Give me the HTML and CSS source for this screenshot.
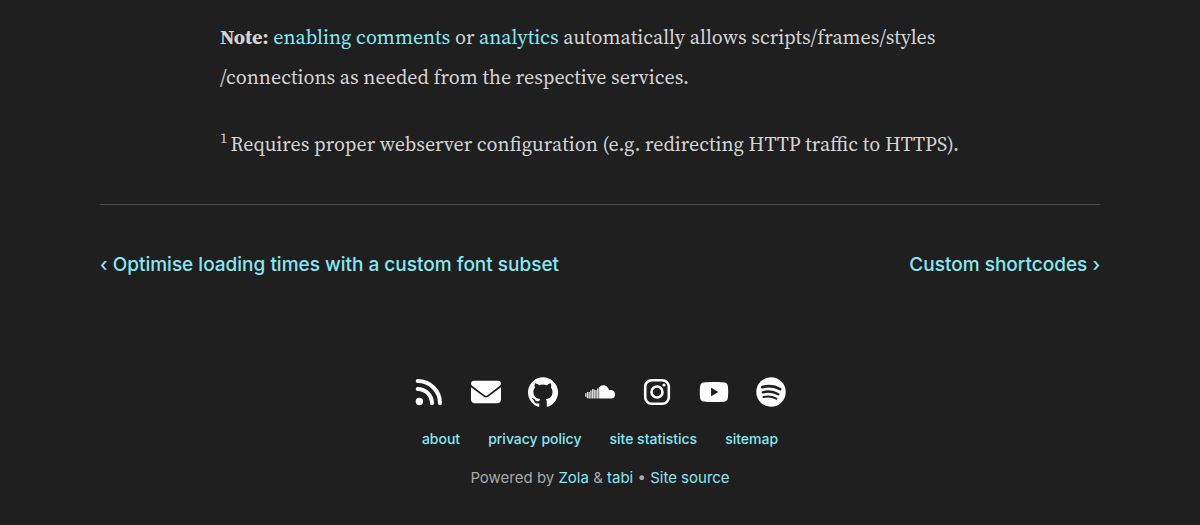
FILE: index.html
```html
<!DOCTYPE html>
<html lang="en">
<head>
<meta charset="utf-8">
<meta name="viewport" content="width=device-width, initial-scale=1">
<title>tabi</title>
<link rel="stylesheet" href="styles.css">
</head>
<body>
<main class="content">
<article class="body">
<p><strong>Note:</strong> <a href="#comments">enabling comments</a> or <a href="#analytics">analytics</a> automatically allows scripts/frames/styles<wbr>/connections as needed from the respective services.</p>
<p class="footnote"><sup>1</sup><span>Requires proper webserver configuration (e.g. redirecting HTTP traffic to HTTPS).</span></p>
</article>
<nav class="pager" aria-label="Posts">
<a href="#prev">‹ Optimise loading times with a custom font subset</a>
<a href="#next">Custom shortcodes ›</a>
</nav>
</main>
<footer class="footer">
<ul class="socials">
<li><a href="#rss" aria-label="RSS"><svg viewBox="0 0 30 30"><path class="arc" d="M3.700 4A22.300 22.300 0 0 1 26 26.300M3.700 12A14.300 14.300 0 0 1 18 26.300"/><circle cx="5.400" cy="24.500" r="3.700"/></svg></a></li>
<li><a href="#email" aria-label="Email"><svg viewBox="0 0 512 512"><path d="M48 64C21.500 64 0 85.500 0 112c0 15 7 29 19 38l218 164c11 9 27 9 38 0l218-164c12-9 19-23 19-38 0-26.500-21.500-48-48-48H48zM0 176v208c0 35 29 64 64 64h384c35 0 64-29 64-64V176L294 339c-22 17-54 17-76 0L0 176z"/></svg></a></li>
<li><a href="#github" aria-label="GitHub"><svg viewBox="0 0 24 24"><path d="M12 .3a12 12 0 0 0-3.800 23.400c.6.1.8-.3.8-.6v-2c-3.300.7-4-1.600-4-1.600-.6-1.400-1.400-1.800-1.400-1.800-1-.7.1-.7.1-.7 1.200 0 1.900 1.200 1.900 1.200 1 1.800 2.800 1.300 3.500 1 0-.8.4-1.300.7-1.600-2.700-.3-5.500-1.300-5.500-6 0-1.200.5-2.300 1.300-3.100-.2-.4-.6-1.600 0-3.200 0 0 1-.3 3.400 1.200a11.500 11.500 0 0 1 6 0c2.300-1.500 3.300-1.200 3.300-1.200.6 1.600.2 2.800 0 3.200.9.800 1.300 1.900 1.300 3.200 0 4.600-2.800 5.600-5.500 5.900.5.400.9 1 .9 2.200v3.300c0 .3.1.7.8.6A12 12 0 0 0 12 .3"/></svg></a></li>
<li><a href="#soundcloud" aria-label="SoundCloud"><svg viewBox="0 0 30 30"><path d="M15 9.500c1-.8 2-1.200 3.300-1.200 3 0 5.200 2.200 5.600 5 3-1.200 6.100.5 6.100 4a4.100 4.100 0 0 1-3.800 4.200H15z"/><path class="wave" d="M.8 16.200v3.500M2.500 15v6.300M4.200 15v6.500M5.900 13.500v8M7.600 12v9.500M9.300 12.500v9M11 13v8.500M12.700 11.500v10M14.400 10v11.500"/></svg></a></li>
<li><a href="#instagram" aria-label="Instagram"><svg class="outline" viewBox="0 0 30 30"><rect x="3.200" y="3.200" width="23.600" height="23.600" rx="6.500"/><circle cx="15" cy="15" r="5.500"/><circle class="dot" cx="22" cy="8" r="1.600"/></svg></a></li>
<li><a href="#youtube" aria-label="YouTube"><svg viewBox="0 0 576 512"><path d="M550 124c-6-24-25-42-49-49-42-11-213-11-213-11S117 64 75 75c-24 7-43 25-49 49-11 43-11 132-11 132s0 90 11 133c6 23 25 41 49 48 42 11 213 11 213 11s171 0 213-11c24-7 43-25 49-48 11-43 11-133 11-133s0-89-11-132zM232 338V175l143 81-143 82z"/></svg></a></li>
<li><a href="#spotify" aria-label="Spotify"><svg viewBox="0 0 30 30"><circle cx="15" cy="15" r="14.700"/><path class="band band-top" d="M6.200 10.200c6-1.700 12.700-1 18 2"/><path class="band" d="M6.800 15.300c5.300-1.500 10.700-.9 15.500 2"/><path class="band band-low" d="M7.500 20c4.600-1.100 8.900-.6 12.800 1.700"/></svg></a></li>
</ul>
<nav class="links" aria-label="Footer">
<a href="#about">about</a>
<a href="#privacy">privacy policy</a>
<a href="#statistics">site statistics</a>
<a href="#sitemap">sitemap</a>
</nav>
<p class="credits">Powered by <a href="#zola">Zola</a> &amp; <a href="#tabi">tabi</a> • <a href="#source">Site source</a></p>
</footer>
</body>
</html>
```

FILE: styles.css
```css
body {
  margin: 0;
  background: #1f1f1f;
  color: #d4d4d4;
  font-family: Inter, sans-serif;
}
a {
  color: #87e8f5;
  text-decoration: none;
}
.content {
  max-width: 1000px;
  margin: 0 auto;
}
.body {
  max-width: 760px;
  margin: 0 auto;
  padding-top: 17px;
  font: 400 20px/40px "Source Serif 4", "Source Serif Pro", "Liberation Serif", serif;
}
.body p {
  margin: 0 0 27px;
}
.body sup {
  font-size: 15px;
  line-height: 0;
  margin-right: 3px;
}
.pager {
  display: flex;
  justify-content: space-between;
  margin-top: 40px;
  padding-top: 44px;
  border-top: 1px solid #4a4a4a;
  font-size: 19px;
  line-height: 32px;
  font-weight: 500;
}
.footer {
  display: flex;
  flex-direction: column;
  align-items: center;
  margin-top: 96px;
  font-size: 15px;
  line-height: 24px;
}
.socials {
  display: flex;
  gap: 27px;
  margin: 0;
  padding: 0;
  list-style: none;
}
.socials a {
  display: block;
}
.socials svg {
  display: block;
  width: 30px;
  height: 30px;
  fill: #fff;
}
.socials .arc {
  fill: none;
  stroke: #fff;
  stroke-width: 4;
  stroke-linecap: round;
}
.wave {
  stroke: #fff;
  stroke-opacity: 0.85;
  stroke-width: 1.3;
}
.socials .outline {
  fill: none;
  stroke: #fff;
  stroke-width: 2.6;
}
.outline .dot {
  fill: #fff;
  stroke: none;
}
.band {
  fill: none;
  stroke: #1f1f1f;
  stroke-width: 2.3;
  stroke-linecap: round;
}
.band-top {
  stroke-width: 2.7;
}
.band-low {
  stroke-width: 2;
}
.links {
  display: flex;
  gap: 28px;
  margin-top: 20px;
  font-size: 14px;
  font-weight: 500;
}
.credits {
  margin: 15px 0 0;
  color: #a8a8a8;
}
```
